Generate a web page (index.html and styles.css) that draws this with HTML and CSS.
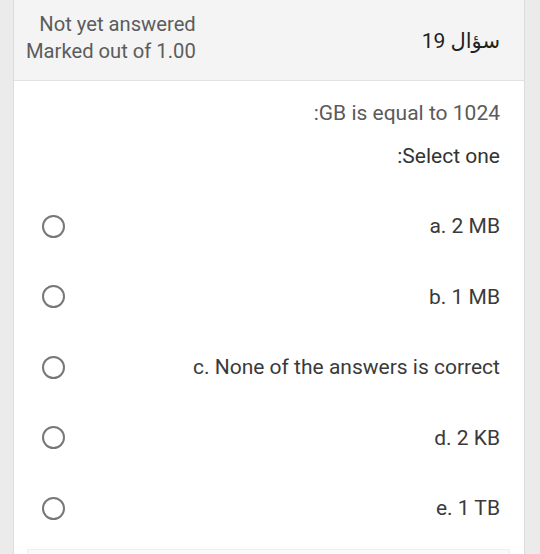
FILE: index.html
```html
<!DOCTYPE html>
<html lang="ar">

<head>
  <meta charset="UTF-8">
  <meta name="viewport" content="width=device-width, initial-scale=1.0">
  <title>Question 19</title>
  <link rel="stylesheet" href="styles.css">
</head>

<body>
  <div class="card">
    <div class="info">
      <div class="state">
        <div>Not yet answered</div>
        <div>Marked out of 1.00</div>
      </div>
      <h3 class="qno" dir="rtl">سؤال 19</h3>
    </div>

    <div class="content">
      <p class="qtext">:GB is equal to 1024</p>
      <p class="prompt">:Select one</p>

      <div class="answers">
        <label class="option"><span class="radio"></span><span>a. 2 MB</span></label>
        <label class="option"><span class="radio"></span><span>b. 1 MB</span></label>
        <label class="option"><span class="radio"></span><span>c. None of the answers is correct</span></label>
        <label class="option"><span class="radio"></span><span>d. 2 KB</span></label>
        <label class="option"><span class="radio"></span><span>e. 1 TB</span></label>
      </div>

      <div class="next-box"></div>
    </div>
  </div>
</body>

</html>
```

FILE: styles.css
```css
body {
  margin: 0;
  height: 554px;
  overflow: hidden;
  background-color: #ebebeb;
  font-family: Roboto, "DejaVu Sans", sans-serif;
}

.card {
  margin-left: 13px;
  width: 510px;
  height: 100%;
  background-color: white;
  border-left: 1px solid #dcdcdc;
  border-right: 1px solid #dcdcdc;
}

.info {
  display: flex;
  justify-content: space-between;
  height: 81px;
  padding: 11px 24px 0 12px;
  box-sizing: border-box;
  background-color: #f4f4f4;
  border-bottom: 1px solid #e2e2e2;
}

.state {
  text-align: right;
  font-size: 20.2px;
  line-height: 27px;
  color: #5c5c5c;
}

.qno {
  margin: 0;
  align-self: center;
  margin-top: -10px;
  font-size: 21px;
  font-weight: normal;
  color: #222;
}

.content {
  padding: 19px 24px 0 28px;
}

.content p {
  margin: 0;
  text-align: right;
  font-size: 21px;
  line-height: 27px;
}

.qtext {
  color: #5a5a5a;
}

.prompt {
  margin-top: 16px !important;
  color: #333;
}

.answers {
  margin-top: 21px;
}

.option {
  display: flex;
  justify-content: space-between;
  align-items: center;
  height: 70.5px;
  font-size: 21px;
  color: #3a3a3a;
}

.radio {
  width: 19px;
  height: 19px;
  border: 2.5px solid #777;
  border-radius: 50%;
}

.next-box {
  margin: 5px -10px 0 -15px;
  height: 4px;
  background-color: #fafafa;
  border: 1px solid #efefef;
  border-bottom: none;
}
```
